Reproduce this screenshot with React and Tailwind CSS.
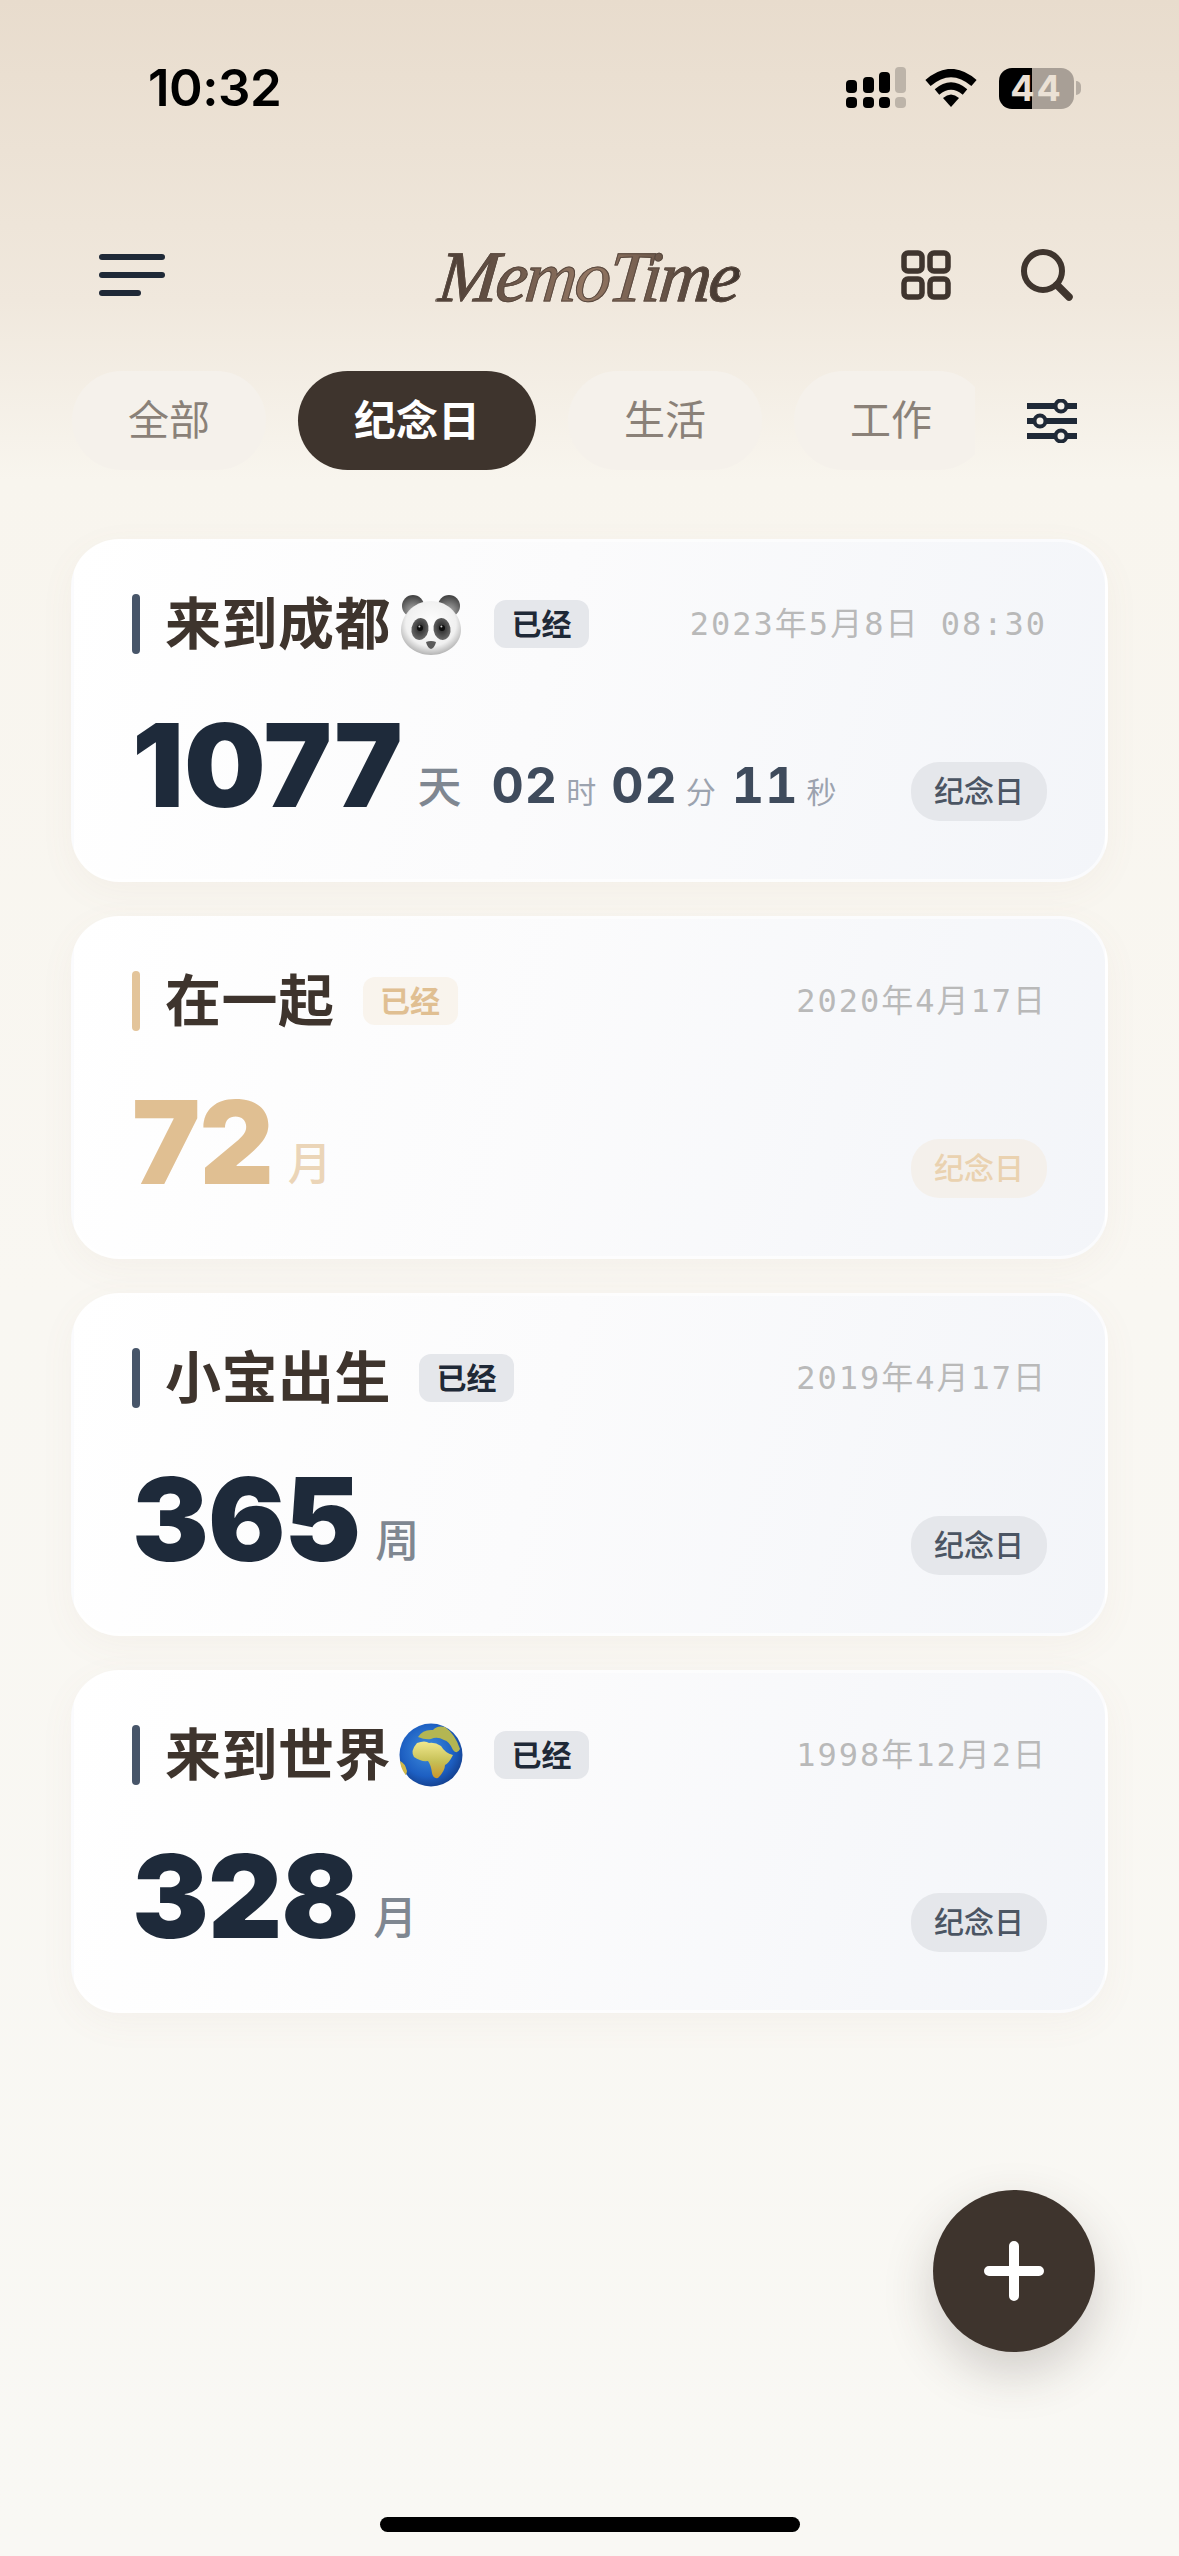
import React from 'react';

const CJK = 'font-["Inter","Noto_Sans_CJK_SC",sans-serif]';

function PandaIcon() {
  return (
    <svg width="64" height="64" viewBox="0 0 64 64" className="shrink-0">
      <defs>
        <radialGradient id="pandaHead" cx="50%" cy="42%" r="58%">
          <stop offset="0%" stopColor="#ffffff" />
          <stop offset="72%" stopColor="#f0f0f0" />
          <stop offset="100%" stopColor="#b4b4b4" />
        </radialGradient>
        <radialGradient id="pandaEar" cx="50%" cy="75%" r="70%">
          <stop offset="0%" stopColor="#b0b0b0" />
          <stop offset="100%" stopColor="#454545" />
        </radialGradient>
        <radialGradient id="pandaPatch" cx="50%" cy="45%" r="55%">
          <stop offset="0%" stopColor="#222" />
          <stop offset="100%" stopColor="#6a6a6a" />
        </radialGradient>
      </defs>
      <circle cx="14" cy="14" r="11" fill="url(#pandaEar)" />
      <circle cx="50" cy="14" r="11" fill="url(#pandaEar)" />
      <path d="M32 9 C50 9 62 24 62 38 C62 52 48 63 32 63 C16 63 2 52 2 38 C2 24 14 9 32 9Z" fill="url(#pandaHead)" />
      <ellipse cx="21" cy="37" rx="8.5" ry="11" fill="url(#pandaPatch)" transform="rotate(10 21 37)" />
      <ellipse cx="43" cy="37" rx="8.5" ry="11" fill="url(#pandaPatch)" transform="rotate(-10 43 37)" />
      <circle cx="21" cy="36" r="3" fill="#0c0c0c" />
      <circle cx="43" cy="36" r="3" fill="#0c0c0c" />
      <circle cx="20.4" cy="34.6" r="1" fill="#ccc" />
      <circle cx="42.4" cy="34.6" r="1" fill="#ccc" />
      <path d="M27 50 Q32 48 37 50 Q35.5 56 32 57 Q28.5 56 27 50Z" fill="#5a5a5a" />
    </svg>
  );
}

function GlobeIcon() {
  return (
    <svg width="64" height="64" viewBox="0 0 64 64" className="shrink-0">
      <defs>
        <radialGradient id="globeSea" cx="45%" cy="42%" r="60%">
          <stop offset="0%" stopColor="#3f8ede" />
          <stop offset="70%" stopColor="#1d5fc2" />
          <stop offset="100%" stopColor="#14408f" />
        </radialGradient>
        <linearGradient id="globeLand" x1="0" y1="0" x2="0" y2="1">
          <stop offset="0%" stopColor="#f0e88e" />
          <stop offset="55%" stopColor="#c6c056" />
          <stop offset="100%" stopColor="#c9962c" />
        </linearGradient>
      </defs>
      <circle cx="32" cy="32" r="31.5" fill="url(#globeSea)" />
      <path d="M18 20 Q26 17 30 20 Q36 19 42 23 Q46 30 54 32 Q50 40 46 42 Q46 48 39 55 Q34 56 33 50 Q32 42 29 38 Q22 39 15 34 Q11 28 18 20Z" fill="url(#globeLand)" />
      <path d="M19 14 Q24 6 34 7 Q38 2 46 4 Q56 11 61 26 Q58 32 54 27 Q50 18 45 17 Q38 13 32 16 Q26 17 19 14Z" fill="#b4b652" />
      <path d="M1 38 Q6 40 8 48 Q7 54 6 51 Q2 46 1 38Z" fill="#d0b84a" />
    </svg>
  );
}

function Card({ title, emoji, date, number, unit, faded, extra, numberClass = 'tracking-[-1px]' }) {
  return (
    <div className="h-[343px] rounded-[48px] border-[3px] border-white/60 bg-[linear-gradient(105deg,#ffffff_0%,#fbfbfc_45%,#f3f5f9_100%)] px-[58px] pt-[52px] shadow-[0_10px_36px_rgba(150,125,95,0.05)] flex flex-col">
      <div className="flex items-center h-[60px]">
        <div className={`w-[8px] h-[60px] rounded-full ${faded ? 'bg-[#e3c49a]' : 'bg-[#475569]'}`} />
        <div className="ml-[25px] text-[56px] leading-none font-bold text-[#3e342d] tracking-[0.5px]">{title}</div>
        {emoji && <div className="ml-[8px] mr-[3px]">{emoji}</div>}
        <div className={`ml-[28px] w-[95px] h-[48px] rounded-[12px] flex items-center justify-center text-[30px] font-bold ${faded ? 'bg-[#f9f4ed] text-[#e0bf92]' : 'bg-[#e5e7eb] text-[#1f2937]'}`}>已经</div>
        <div className='ml-auto text-[32px] tracking-[2px] text-[#b9b9b9] font-["DejaVu_Sans_Mono","Noto_Sans_CJK_SC",monospace]'>{date}</div>
      </div>
      <div className="mt-[54px] flex items-end justify-between">
        <div className="flex items-baseline">
          <span className={`text-[115px] leading-[115px] font-black ${numberClass} ${faded ? 'text-[#e0bf92]' : 'text-[#1e2a3a]'}`}>{number}</span>
          <span className={`ml-[15px] -translate-y-[4px] text-[44px] leading-none font-medium ${faded ? 'text-[#ebd5b8]' : 'text-[#7f8791]'}`}>{unit}</span>
          {extra}
        </div>
        <div className={`w-[136px] h-[59px] rounded-[28px] flex items-center justify-center text-[30px] font-medium mb-[2px] ${faded ? 'bg-[#f4f0eb] text-[#ead2b0]' : 'bg-[#e5e7eb] text-[#4b5563]'}`}>纪念日</div>
      </div>
    </div>
  );
}

function Countdown() {
  const parts = [['02', '时', 'ml-[30px]'], ['02', '分', 'ml-[15px]'], ['11', '秒', 'ml-[16px]']];
  return (
    <>
      {parts.map(([value, label, margin], i) => (
        <span key={i} className={`flex items-baseline -translate-y-[4px] ${margin}`}>
          <span className="text-[50px] leading-none font-bold tabular-nums text-[#3f4b5c] tracking-[1px]">{value}</span>
          <span className="ml-[8px] text-[30px] leading-none text-[#9ca3af]">{label}</span>
        </span>
      ))}
    </>
  );
}

export default function App() {
  const tabs = ['全部', '纪念日', '生活', '工作'];
  return (
    <div className={`relative w-[1179px] h-[2556px] overflow-hidden flex flex-col bg-[linear-gradient(180deg,#e8dccd_0px,#f0e8dd_300px,#f8f5ee_480px,#f9f7f2_1300px,#f9f8f4_2556px)] ${CJK}`}>
      {/* status bar */}
      <div className="h-[197px] pl-[148px] pr-[98px] pt-[58px] flex items-start justify-between">
        <span className='text-[51px] leading-[60px] font-semibold text-black font-["Inter",sans-serif] tracking-[-0.5px]'>10:32</span>
        <div className="flex items-center pt-[9px]">
          <svg width="60" height="42" viewBox="0 0 60 42">
            <rect x="0" y="13" width="11" height="13" rx="4" fill="#000" />
            <rect x="17" y="10" width="11" height="16" rx="4" fill="#000" />
            <rect x="33" y="5" width="11" height="21" rx="4" fill="#000" />
            <rect x="49" y="0" width="11" height="26" rx="4" fill="#bdb4a9" />
            <rect x="0" y="30" width="11" height="11" rx="4" fill="#000" />
            <rect x="17" y="30" width="11" height="11" rx="4" fill="#000" />
            <rect x="33" y="30" width="11" height="11" rx="4" fill="#000" />
            <rect x="49" y="30" width="11" height="11" rx="4" fill="#bdb4a9" />
          </svg>
          <svg width="52" height="38" viewBox="0 0 52 38" className="ml-[19px]">
            <path d="M3 14 Q26 -6 49 14" stroke="#000" strokeWidth="8" fill="none" strokeLinecap="butt" />
            <path d="M12 23 Q26 11 40 23" stroke="#000" strokeWidth="7" fill="none" strokeLinecap="butt" />
            <path d="M18 29 Q26 22 34 29 L26 38Z" fill="#000" />
          </svg>
          <div className='ml-[22px] w-[75px] h-[41px] rounded-[13px] bg-[linear-gradient(90deg,#000_44%,#a89f96_44%)] flex items-center justify-center text-[36px] leading-none font-bold text-[#ebe1d5] tracking-[2px] font-["Inter",sans-serif]'>44</div>
          <div className="ml-[2px] w-[5px] h-[14px] rounded-r-full bg-[#b6ada3]" />
        </div>
      </div>

      {/* header */}
      <div className="h-[160px] pl-[99px] pr-[105px] flex items-center">
        <div className="w-[66px] flex flex-col gap-[12px] mt-[-4px]">
          <div className="h-[6px] w-[66px] rounded-full bg-[#1f2937]" />
          <div className="h-[6px] w-[66px] rounded-full bg-[#1f2937]" />
          <div className="h-[6px] w-[42px] rounded-full bg-[#1f2937]" />
        </div>
        <div className="flex-1 flex justify-center pl-[112px]">
          <span className='text-[72px] leading-none italic font-normal tracking-[-2.5px] -skew-x-6 text-transparent bg-clip-text bg-gradient-to-r from-[#4a3c34] via-[#947763] to-[#3f342d] [-webkit-text-stroke:1px_#5a4a40] font-["Liberation_Serif",serif]'>MemoTime</span>
        </div>
        <svg width="50" height="50" viewBox="0 0 50 50" fill="none" stroke="#3f352e" strokeWidth="5.5" className="mt-[-4px]">
          <rect x="3" y="3" width="18" height="18" rx="4" />
          <rect x="29" y="3" width="18" height="18" rx="4" />
          <rect x="3" y="29" width="18" height="18" rx="4" />
          <rect x="29" y="29" width="18" height="18" rx="4" />
        </svg>
        <svg width="54" height="54" viewBox="0 0 54 54" fill="none" stroke="#3f352e" className="ml-[69px] mt-[-4px]">
          <circle cx="23" cy="23" r="19" strokeWidth="6" />
          <path d="M37 37 L49 49" strokeWidth="7.5" strokeLinecap="round" />
        </svg>
      </div>

      {/* tabs */}
      <div className="mt-[14px] h-[99px] pl-[72px] flex items-center">
        <div className="w-[903px] flex gap-[32px] overflow-hidden">
          {tabs.map((tab, i) => (
            <div
              key={tab}
              className={`h-[99px] shrink-0 rounded-full flex items-center ${i === 1 ? 'bg-[#3e342d] text-white text-[42px] font-semibold px-[56px]' : 'bg-[#f5f1eb] text-[#8a8178] text-[41px] font-normal px-[56px]'}`}
            >
              {tab}
            </div>
          ))}
        </div>
        <svg width="50" height="44" viewBox="0 0 50 44" className="ml-[52px]" fill="#f5f1ea" stroke="#1f2937">
          <path d="M1 7H49M1 22H49M1 37H49" strokeWidth="6" strokeLinecap="round" />
          <circle cx="34" cy="7" r="5.5" strokeWidth="4" />
          <circle cx="13" cy="22" r="5.5" strokeWidth="4" />
          <circle cx="34" cy="37" r="5.5" strokeWidth="4" />
        </svg>
      </div>

      {/* cards */}
      <div className="mt-[69px] px-[71px] flex flex-col gap-[34px]">
        <Card title="来到成都" emoji={<PandaIcon />} date="2023年5月8日 08:30" number="1077" unit="天" extra={<Countdown />} numberClass="tracking-[0px]" />
        <Card title="在一起" date="2020年4月17日" number="72" unit="月" faded />
        <Card title="小宝出生" date="2019年4月17日" number="365" unit="周" />
        <Card title="来到世界" emoji={<GlobeIcon />} date="1998年12月2日" number="328" unit="月" />
      </div>

      {/* add button */}
      <div className="absolute left-[933px] top-[2190px] w-[162px] h-[162px] rounded-full bg-[#3e342d] shadow-[0_20px_50px_rgba(62,52,45,0.22)] flex items-center justify-center">
        <svg width="60" height="60" viewBox="0 0 60 60" stroke="#fff" strokeWidth="10" strokeLinecap="round">
          <path d="M30 5V55M5 30H55" />
        </svg>
      </div>

      {/* home indicator */}
      <div className="mt-auto mb-[24px] mx-auto w-[420px] h-[15px] rounded-full bg-black" />
    </div>
  );
}
